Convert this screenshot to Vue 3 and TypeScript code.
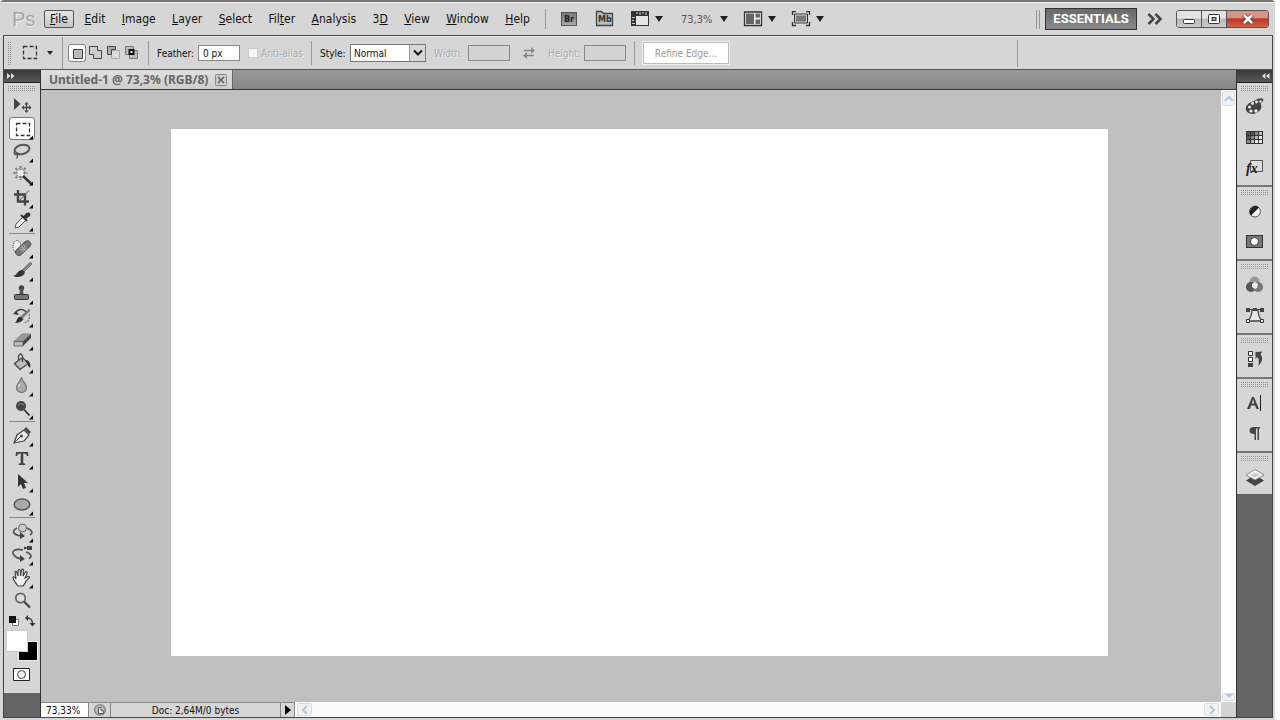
<script setup lang="ts">
import { ref } from 'vue'

interface Item { name: string; art: string; more?: boolean }
interface MenuEntry { pre: string; key: string; post: string }

const menus: MenuEntry[] = [
  { pre: '', key: 'F', post: 'ile' },
  { pre: '', key: 'E', post: 'dit' },
  { pre: '', key: 'I', post: 'mage' },
  { pre: '', key: 'L', post: 'ayer' },
  { pre: '', key: 'S', post: 'elect' },
  { pre: 'Fil', key: 't', post: 'er' },
  { pre: '', key: 'A', post: 'nalysis' },
  { pre: '3', key: 'D', post: '' },
  { pre: '', key: 'V', post: 'iew' },
  { pre: '', key: 'W', post: 'indow' },
  { pre: '', key: 'H', post: 'elp' },
]

const toolGroups: Item[][] = [
  [
    { name: 'Move', art: '<path d="M5 4v12l6.500-6z" fill="#444"/><path d="M17.500 9v9M13 13.500h9" stroke="#444" stroke-width="1.300"/><path d="M17.500 8l2.200 2.500h-4.400zM17.500 19l2.200-2.500h-4.400zM12.500 13.500l2.500-2.200v4.400zM22.500 13.500L20 11.300v4.400z" fill="#444"/>' },
    { name: 'Marquee', more: true, art: '<rect x="7.500" y="6.500" width="13" height="12" fill="none" stroke="#333" stroke-width="1.300" stroke-dasharray="4 2"/>' },
    { name: 'Lasso', more: true, art: '<ellipse cx="13" cy="9.500" rx="7.500" ry="4.500" transform="rotate(-12 13 9.500)" fill="none" stroke="#555" stroke-width="2"/><path d="M6.500 12c-2 0-1.500 3 .5 2.500s1-2.500-.5-2.500M7 14c2 1 2 3 .5 4.500" fill="none" stroke="#555" stroke-width="1.300"/>' },
    { name: 'Magic wand', more: true, art: '<circle cx="11.500" cy="10" r="4.500" fill="#eee" stroke="#999"/><path d="M11.500 3v4M11.500 13v4M4.500 10h4M14.500 10h4M6.500 5l2.500 2.500M16.500 5L14 7.500M6.500 15L9 12.500" stroke="#777" stroke-width="2" stroke-dasharray="2 1"/><path d="M14 13l8 7.500" stroke="#333" stroke-width="2.400"/>' },
    { name: 'Crop', more: true, art: '<path d="M9 4v11.500h11M5 8.500h11v11" fill="none" stroke="#444" stroke-width="2.400"/><path d="M9.500 15.500L20 4.500" stroke="#555"/>' },
    { name: 'Eyedropper', more: true, art: '<path d="M6 19l1-4 7-7 3 3-7 7z" fill="#f4f4f4" stroke="#555"/><path d="M12 6l6 6M14 9l4.500-4.500" stroke="#333" stroke-width="2"/><path d="M15 8l3-4q2-1 3 0t0 3l-4 3z" fill="#333"/>' },
  ],
  [
    { name: 'Healing brush', more: true, art: '<ellipse cx="8" cy="10.500" rx="4" ry="6" fill="#eee" stroke="#333" stroke-dasharray="1 1"/><g transform="rotate(-43 14 12)"><rect x="5" y="9" width="18" height="6.500" rx="3" fill="#777" stroke="#555"/><rect x="11" y="9.500" width="6" height="5.500" fill="#aaa"/><path d="M12 11h1M15 11h1M12 13.500h1M15 13.500h1" stroke="#333"/></g>' },
    { name: 'Brush', more: true, art: '<path d="M13 11l8-7.500q2 0 1.500 2L15 13z" fill="#888" stroke="#555" stroke-width=".7"/><path d="M13.500 11l2.500 2.500q-2 4.500-8 4.500-3 0-3.500-1.500 3-.5 4-3 2-3 5-2.500z" fill="#333"/>' },
    { name: 'Clone stamp', more: true, art: '<circle cx="12.500" cy="6" r="2.700" fill="#444"/><path d="M11 7h3l.5 6h-4z" fill="#555"/><rect x="5.500" y="12.500" width="14" height="5" rx="1" fill="#777" stroke="#333"/>' },
    { name: 'History brush', more: true, art: '<path d="M6.500 8c2-4 7-5 11-1" fill="none" stroke="#444" stroke-width="1.500"/><path d="M4 9l6 1-3-4z" fill="#333"/><path d="M20 9q2 7-5 9" fill="none" stroke="#777" stroke-width="1.300" stroke-dasharray="2 1"/><path d="M12 11l8-7 1.500 1.500L14 13z" fill="#777"/><path d="M12 11.500l2.500 2.500q-2 4-9 4 2-1 2.500-3.500 1-3 4-3z" fill="#333"/>' },
    { name: 'Eraser', more: true, art: '<path d="M5 13.500L13 6h9l-8 7.500z" fill="#999" stroke="#777" stroke-width=".8"/><path d="M5 13.500h9V18H5z" fill="#bbb" stroke="#555" stroke-width=".8"/><path d="M14 13.500L22 6v4l-8 8z" fill="#444"/>' },
    { name: 'Paint bucket', more: true, art: '<path d="M5.500 12.500l8-6 6 6-8.500 6z" fill="#bbb" stroke="#444" stroke-width="1.300"/><path d="M9.500 9V5q2-4 4 0v6" fill="none" stroke="#444" stroke-width="1.300"/><path d="M16 9q5-1 5.500 6.500-.5 2-2 0L18 12z" fill="#333"/>' },
    { name: 'Blur', more: true, art: '<path d="M12.500 3.500c1 4 5 6 5 10a5 5 0 0 1-10 0c0-4 4-6 5-10z" fill="#aaa" stroke="#777" stroke-width="1.200"/><path d="M9.500 13q0-2 2-3.500" stroke="#eee" fill="none"/>' },
    { name: 'Dodge', more: true, art: '<circle cx="12" cy="9" r="5" fill="#444"/><path d="M9 8q3-3 6 0" stroke="#888" fill="none"/><path d="M15 12.500l5.500 6" stroke="#333" stroke-width="1.800"/>' },
  ],
  [
    { name: 'Pen', more: true, art: '<path d="M5 19L8 11l7-5 5 5-5 6z" fill="#eee" stroke="#444" stroke-width="1.200"/><path d="M15 5l2-2 5 5-2 2z" fill="#444"/><path d="M5 19l7-7" stroke="#444"/><circle cx="12.500" cy="12" r="1.500" fill="#444"/>' },
    { name: 'Type', more: true, art: '<path d="M7 5h12l.5 4H18q-.5-2.500-3-2.500h-.7V16l2 .7V18H9.700v-1.300l2-.7V6.500H11Q8.500 6.500 8 9H6.500z" fill="#444"/>' },
    { name: 'Path selection', more: true, art: '<path d="M9 4v13l3-3 2 5 3-1.200-2-4.800h4z" fill="#333"/>' },
    { name: 'Ellipse', more: true, art: '<ellipse cx="13" cy="11.500" rx="7.800" ry="5.500" fill="#aaa" stroke="#555" stroke-width="1.500"/>' },
  ],
  [
    { name: '3D rotate', more: true, art: '<path d="M8 8c-8 4-1 8 7 8M18 8c7 3 5 6 3 7" fill="none" stroke="#555" stroke-width="1.700"/><path d="M11 12l5 4-5 3z" fill="#444"/><circle cx="13.500" cy="8" r="4" fill="#ccc" stroke="#666"/>' },
    { name: '3D orbit', more: true, art: '<path d="M14 7C7 5 2 8 4.500 11.500 6.500 14.500 10 16 14 16M17 9c6 2 6 5 3 6.500" fill="none" stroke="#555" stroke-width="1.700"/><path d="M11 12l5 4-5 3zM15 3.500l3 1V3h5v4h-5V5.500l-3 1z" fill="#444"/>' },
    { name: 'Hand', more: true, art: '<path d="M9 20q-4-5-5-8c0-2 2-1 3 1L6 6c1-1.500 2 0 3 4V5c0-2 2-2 2.500 0v5l1-6c1-1.500 2.500-.5 2 1l-.5 5 2.500-4c1-1 2 0 1.500 1.500L16 12l3-1.500c2 0 2 1 .5 2L17 15q-1 3-3 5z" fill="#eee" stroke="#444" stroke-width="1.200"/>' },
    { name: 'Zoom', art: '<circle cx="11.500" cy="9" r="4.700" fill="#ddd" stroke="#666" stroke-width="1.700"/><path d="M15 12.500l6 6" stroke="#444" stroke-width="2.300"/>' },
  ],
]

const panelGroups: Item[][] = [
  [
    { name: 'Color', art: '<path d="M14 9c6-4 11-3 9 0-1 2-3 2-2 4 2 4-3 8-8 9-5 0-8-3-7-7 1-3 4-5 8-6z" fill="#444"/><g fill="#eee"><circle cx="9.500" cy="15" r="1.500"/><circle cx="12.500" cy="11.500" r="1.400"/><circle cx="16.500" cy="10" r="1.400"/><circle cx="20.500" cy="9.500" r="1.200"/><circle cx="11" cy="19" r="1.600"/><circle cx="16" cy="19" r="1.700"/></g>' },
    { name: 'Swatches', art: '<path d="M6 9h17v13H6z" fill="#333"/><path d="M7 10h3v3H7zM11 10h3v3h-3zM7 14h3v3H7z" fill="#555"/><path d="M15 10h3v3h-3zM11 14h3v3h-3zM7 18h3v3H7z" fill="#888"/><path d="M19 10h3v3h-3zM15 14h3v3h-3zM11 18h3v3h-3z" fill="#bbb"/><path d="M19 14h3v3h-3zM15 18h3v3h-3zM19 18h3v3h-3z" fill="#eee"/>' },
    { name: 'Styles', art: '<path d="M10.500 8.500h12v11h-12z" fill="#ddd" stroke="#555"/><text x="6" y="21" font-family="Liberation Serif, serif" font-size="14" font-style="italic" font-weight="700" fill="#222">fx</text>' },
  ],
  [
    { name: 'Adjustments', art: '<circle cx="15" cy="15.500" r="5.500" fill="#f4f4f4" stroke="#555"/><path d="M19 11.500a5.700 5.700 0 0 0-8 8z" fill="#222"/>' },
    { name: 'Masks', art: '<rect x="6.500" y="9.500" width="16" height="12" fill="#777" stroke="#333"/><circle cx="14.500" cy="15.500" r="4" fill="#fff" stroke="#333"/>' },
  ],
  [
    { name: 'Channels', art: '<circle cx="14.500" cy="11.500" r="5" fill="#999"/><circle cx="11" cy="17" r="5" fill="#555"/><circle cx="18" cy="17" r="5" fill="#777"/><path d="M12 14l3-2 3 2-1 4-2 1-3-2z" fill="#eee"/>' },
    { name: 'Paths', art: '<path d="M8 21q4-5 4-11h6q0 6 4 11z" fill="#e8e8e8" stroke="#444" stroke-width="1.300"/><path d="M7 9.500h16" stroke="#444"/><path d="M6 8h4v4H6zM13 8h4v3h-4zM20 8h4v4h-4z" fill="#444"/><path d="M6.500 19.500h3v3h-3zM20.500 19.500h3v3h-3z" fill="#fff" stroke="#333"/>' },
  ],
  [
    { name: 'History', art: '<path d="M8.500 7.500h4v4h-4zM8.500 13.500h4v4h-4z" fill="#fff" stroke="#333"/><path d="M8 19h5v4H8z" fill="#444"/><path d="M15.500 8l7-.5-2 2.500q4 5-2 12 1-6-1-9l-2 2z" fill="#444"/>' },
  ],
  [
    { name: 'Character', art: '<path d="M7 21l5-12h2l5 12h-2.500L15 17.500h-4L10 21zM11.800 15.500h2.600L13 11.500z" fill="#444"/><path d="M20.500 7v16" stroke="#222"/>' },
    { name: 'Paragraph', art: '<path d="M14 9h6v1.500h-1V22h-1.500V10.500H16V22h-1.500v-6q-5 0-5-3.500T14 9z" fill="#444"/>' },
  ],
  [
    { name: 'Layers', art: '<path d="M6 18.500l9-5.500 9 5.500-9 5.500z" fill="#444"/><path d="M6 13l9-5.500 9 5.500-9 5z" fill="#f4f4f4" stroke="#777" stroke-width=".8"/><path d="M10 13l5-2.500 5 2.500-5 2.500z" fill="#ccc"/>' },
  ],
]

const modes: Item[] = [
  { name: 'New selection', art: '<path d="M5.500 5.500h9v9h-9z" fill="#bbb" stroke="#444"/>' },
  { name: 'Add to selection', art: '<path d="M3.500 2.500h8v4h4v8h-8v-4h-4z" fill="#ccc" stroke="#444"/>' },
  { name: 'Subtract from selection', art: '<path d="M7.500 6.500h8v8h-8z" fill="#ddd" stroke="#aaa"/><path d="M3.500 10.500v-8h8v3h-4v5z" fill="#aaa" stroke="#444"/>' },
  { name: 'Intersect with selection', art: '<path d="M3.500 2.500h8v8h-8zM7.500 6.500h8v8h-8z" fill="#bbb" stroke="#777"/><path d="M7.500 6h4v4h-4z" fill="#ddd" stroke="#111" stroke-width="2"/>' },
]

const activeTool = ref('Marquee')
const feather = ref('0 px')
const antiAlias = ref(false)
const style = ref('Normal')
const zoomLevel = ref('73,33%')
</script>

<template>
  <div class="window">
    <header class="menubar">
      <span class="logo">Ps</span>
      <nav class="menus">
        <button v-for="(m, i) in menus" :key="i" class="menu" :class="{ open: i === 0 }">{{ m.pre }}<u>{{ m.key }}</u>{{ m.post }}</button>
      </nav>
      <div class="launch">
        <button class="plain br" aria-label="Bridge">Br</button>
        <button class="plain mb" aria-label="Mini Bridge">
          <svg width="20" height="18" viewBox="0 0 20 18"><path d="M1.500 15.500V1.500h5l2 2h9v12z" fill="#bbb" stroke="#444" stroke-width="1.300" /></svg>
          <span>Mb</span>
        </button>
        <button class="plain drop" aria-label="View extras">
          <svg width="20" height="16" viewBox="0 0 20 16"><path d="M1 0h18v15H1z" fill="#333" /><path d="M6 5h12v9H6z" fill="#e6e6e6" /><path d="M7 1v2M10 1v3M13 1v2M16 1v3M2 6.500h3M2 9.500h2M2 12.500h3" stroke="#ccc" /></svg>
          <i class="caret"></i>
        </button>
        <button class="plain drop zoomdrop">73,3%<i class="caret"></i></button>
        <button class="plain drop" aria-label="Arrange documents">
          <svg width="20" height="16" viewBox="0 0 20 16"><path d="M1.500 1h17v13.500h-17z" fill="#eee" stroke="#333" stroke-width="1.300" /><path d="M3 2.500h8V13H3zM12.500 2.500H17v4h-4.500zM12.500 8.500H17V13h-4.500z" fill="#666" /></svg>
          <i class="caret"></i>
        </button>
        <button class="plain drop" aria-label="Screen mode">
          <svg width="20" height="16" viewBox="0 0 20 16"><path d="M1.500 4V.5H5M15 .5h3.500V4M1.500 11v3.500H5M15 14.500h3.500V11" fill="none" stroke="#333" stroke-width="1.300" /><path d="M3.500 3h13v9h-13z" fill="#777" stroke="#333" /><path d="M4.500 4h11v7h-11z" fill="none" stroke="#ccc" /></svg>
          <i class="caret"></i>
        </button>
      </div>
      <div class="right">
        <i class="bars"></i>
        <button class="workspace">ESSENTIALS</button>
        <button class="plain chev" aria-label="More workspaces">
          <svg width="16" height="14" viewBox="0 0 16 14"><path d="M1.500 2l5 5-5 5M8.500 2l5 5-5 5" fill="none" stroke="#444" stroke-width="2.500" /></svg>
        </button>
        <div class="controls">
          <button aria-label="Minimize"><svg width="14" height="14" viewBox="0 0 14 14"><rect x="1.500" y="7.500" width="11" height="4" rx="1" fill="#fff" stroke="#333" /></svg></button>
          <button aria-label="Restore"><svg width="14" height="14" viewBox="0 0 14 14"><rect x="1.500" y="2.500" width="11" height="9" rx="1" fill="#fff" stroke="#333" /><rect x="5" y="5.500" width="4" height="3" fill="#aaa" stroke="#333" /></svg></button>
          <button class="close" aria-label="Close"><svg width="14" height="14" viewBox="0 0 14 14"><path d="M3 3l8 8M11 3l-8 8" stroke="#533" stroke-width="4.500" /><path d="M3 3l8 8M11 3l-8 8" stroke="#fff" stroke-width="2.600" /></svg></button>
        </div>
      </div>
    </header>

    <div class="frame">
      <div class="options">
        <i class="grip vertical"></i>
        <button class="plain preset" aria-label="Tool preset">
          <svg width="16" height="16" viewBox="0 0 16 16"><rect x="1.500" y="1.500" width="13" height="12" fill="none" stroke="#333" stroke-width="1.300" stroke-dasharray="4 2" /></svg>
          <i class="caret small"></i>
        </button>
        <i class="rule tall"></i>
        <div class="modes">
          <button v-for="(m, i) in modes" :key="m.name" class="mode" :class="{ on: i === 0 }" :aria-label="m.name">
            <svg width="18" height="18" viewBox="0 0 18 18" v-html="m.art"></svg>
          </button>
        </div>
        <i class="rule"></i>
        <label class="feather" for="feather">Feather:</label>
        <input id="feather" v-model="feather" class="box" type="text">
        <input id="anti" v-model="antiAlias" class="tick" type="checkbox" disabled>
        <label class="anti dim" for="anti">Anti-alias</label>
        <i class="rule"></i>
        <label class="stylelabel" for="style">Style:</label>
        <div class="select">
          <select id="style" v-model="style"><option>Normal</option><option>Fixed Ratio</option><option>Fixed Size</option></select>
          <span class="knob"><svg width="10" height="8" viewBox="0 0 10 8"><path d="M1 1.500l4 4 4-4" fill="none" stroke="#222" stroke-width="2.200" /></svg></span>
        </div>
        <label class="width dim" for="width">Width:</label>
        <input id="width" class="box off" type="text" disabled>
        <button class="plain swap" aria-label="Swap width and height" disabled>
          <svg width="12" height="12" viewBox="0 0 12 12"><path d="M1 3.500h9M2 8.500h9" stroke="#888" stroke-width="1.300" /><path d="M8 0l4 3.500L8 7zM4 5L0 8.500 4 12z" fill="#888" /></svg>
        </button>
        <label class="height dim" for="height">Height:</label>
        <input id="height" class="box off" type="text" disabled>
        <i class="rule"></i>
        <button class="refine" disabled>Refine Edge...</button>
        <i class="rule end"></i>
      </div>

      <div class="workarea">
        <aside class="toolbar">
          <button class="collapse" aria-label="Collapse toolbar"><svg width="8" height="6" viewBox="0 0 8 6"><path d="M0 0l3.500 3L0 6zM4 0l3.500 3L4 6z" fill="#ddd" /></svg></button>
          <div class="tools">
            <i class="grip"></i>
            <div v-for="(group, g) in toolGroups" :key="g" class="toolgroup">
              <button v-for="t in group" :key="t.name" class="tool" :class="{ on: t.name === activeTool }" :aria-label="t.name" @click="activeTool = t.name">
                <svg width="26" height="23" viewBox="0 0 26 23"><g v-html="t.art"></g><path v-if="t.more" d="M24 18.500v4h-4z" fill="#000" /></svg>
              </button>
            </div>
            <div class="minis">
              <button class="plain" aria-label="Default colors"><svg width="12" height="12" viewBox="0 0 12 12"><path d="M4.500 4.500h6v6h-6z" fill="#fff" stroke="#777" /><path d="M1 1h7v7H1z" fill="#111" /></svg></button>
              <button class="plain" aria-label="Switch colors"><svg width="12" height="12" viewBox="0 0 12 12"><path d="M3 3q5 0 5.500 5" fill="none" stroke="#444" stroke-width="1.500" /><path d="M1 3l3-3v6zM5.500 8h6l-3 3.500z" fill="#333" /></svg></button>
            </div>
            <div class="swatches">
              <button class="swatch back" aria-label="Background color"></button>
              <button class="swatch fore" aria-label="Foreground color"></button>
            </div>
            <button class="plain mask" aria-label="Quick mask"><svg width="18" height="14" viewBox="0 0 18 14"><path d="M.5.5h16v12H.500z" fill="#fff" stroke="#222" /><circle cx="8.500" cy="6.500" r="4" fill="#eee" stroke="#444" /></svg></button>
          </div>
        </aside>

        <main class="document">
          <div class="tabs">
            <div class="tab">
              <span>Untitled-1 @ 73,3% (RGB/8)</span>
              <button aria-label="Close document"><svg width="12" height="12" viewBox="0 0 12 12"><rect x=".5" y=".5" width="11" height="11" rx="1" fill="#ccc" stroke="#888" /><path d="M3 3l6 6M9 3L3 9" stroke="#555" stroke-width="1.300" /></svg></button>
            </div>
          </div>
          <div class="viewport">
            <div class="stage"><div class="paper"></div></div>
            <div class="vscroll">
              <button class="arrow" aria-label="Scroll up"><svg width="10" height="8" viewBox="0 0 10 8"><path d="M1 6l4-4 4 4" fill="none" stroke="#b4c6d8" stroke-width="2" /></svg></button>
              <button class="arrow cut" aria-label="Scroll down"><svg width="8" height="4" viewBox="0 0 8 4"><path d="M0 0h8L4 4z" fill="#b4c6d8" /></svg></button>
            </div>
          </div>
          <footer class="status">
            <input v-model="zoomLevel" class="zoomfield" type="text" aria-label="Zoom level">
            <button class="cell clock" aria-label="Version cue"><svg width="14" height="14" viewBox="0 0 14 14"><circle cx="7" cy="7" r="5.300" fill="#bbb" stroke="#888" stroke-width="1.500" /><path d="M5.500 4.500v6h5V8L8 7.500V4.500z" fill="#eee" stroke="#555" /></svg></button>
            <span class="cell doc">Doc: 2,64M/0 bytes</span>
            <button class="cell play" aria-label="Status options"><svg width="6" height="10" viewBox="0 0 6 10"><path d="M0 0l6 5-6 5z" fill="#000" /></svg></button>
            <div class="hscroll">
              <button class="arrow" aria-label="Scroll left"><svg width="8" height="10" viewBox="0 0 8 10"><path d="M6 1L2 5l4 4" fill="none" stroke="#b4c6d8" stroke-width="2" /></svg></button>
              <button class="arrow" aria-label="Scroll right"><svg width="8" height="10" viewBox="0 0 8 10"><path d="M2 1l4 4-4 4" fill="none" stroke="#b4c6d8" stroke-width="2" /></svg></button>
            </div>
            <i class="corner"></i>
          </footer>
        </main>

        <aside class="dock">
          <button class="collapse" aria-label="Expand panels"><svg width="8" height="6" viewBox="0 0 8 6"><path d="M3.500 0L0 3l3.500 3zM7.500 0L4 3l3.500 3z" fill="#ddd" /></svg></button>
          <div v-for="(group, g) in panelGroups" :key="g" class="panelgroup">
            <i class="grip"></i>
            <button v-for="p in group" :key="p.name" class="plain panel" :aria-label="p.name">
              <svg width="30" height="30" viewBox="0 0 30 30" v-html="p.art"></svg>
            </button>
          </div>
        </aside>
      </div>
    </div>
  </div>
</template>

<style>
body { background: #fff; }
</style>

<style scoped>
.window, .window * { box-sizing: border-box; }
.window {
  display: flex;
  flex-direction: column;
  height: 100vh;
  margin-right: 5px;
  padding-bottom: 2px;
  background: #d6d6d6;
  border-top: 2px solid #777;
  border-radius: 4px 4px 0 0;
  font-family: "DejaVu Sans Condensed", "DejaVu Sans", "Liberation Sans", sans-serif;
  font-size: 10px;
  color: #111;
}
button, input, select { font: inherit; color: inherit; margin: 0; padding: 0; }
svg { display: block; }
.plain { border: 0; background: none; display: flex; align-items: center; justify-content: center; }

.menubar { flex: none; display: flex; align-items: center; height: 33px; border-top: 1px solid #eee; }
.logo { width: 32px; margin-left: 12px; font: 20px/28px "Liberation Sans", sans-serif; color: #a4a4a4; text-shadow: 1px 1px 0 #eee; }
.menus { display: flex; justify-content: space-between; width: 492px; margin-right: 9px; }
.menu { height: 18px; padding: 0 5px; border: 1px solid transparent; border-radius: 2px; background: none; font-size: 12px; line-height: 16px; white-space: nowrap; }
.menu.open { border-color: #555; background: linear-gradient(#e6e6e6, #c4c4c4); }
.launch { display: flex; align-items: center; flex: 1; height: 20px; padding-left: 15px; border-left: 1px solid #999; }
.br { width: 16px; height: 14px; border: 1px solid #555; background: linear-gradient(#777, #aaa); font-size: 9px; font-weight: 700; color: #222; }
.mb { position: relative; width: 20px; margin-left: 18px; }
.mb span { position: absolute; inset: 4px 0 0; font-size: 9px; line-height: 11px; font-weight: 700; color: #333; }
.drop { gap: 5px; margin-left: 15px; height: 16px; }
.zoomdrop { margin-left: 18px; gap: 8px; font-size: 11px; color: #555; }
.caret { width: 0; height: 0; border: 4px solid transparent; border-top: 6px solid #222; border-bottom: 0; }
.caret.small { border-width: 4px 3px 0; }
.right { display: flex; align-items: center; margin-right: 6px; }
.bars { width: 4px; height: 19px; margin-right: 5px; border: solid #999; border-width: 0 1px; }
.workspace { width: 92px; height: 22px; border: 1px solid #333; background: linear-gradient(#696969, #888); color: #fff; font: 700 13px/20px Roboto, "Liberation Sans", sans-serif; }
.chev { margin: 0 13px 0 10px; }
.controls { display: flex; width: 93px; height: 18px; border: 1px solid #555; border-radius: 3px; overflow: hidden; }
.controls button { display: flex; align-items: center; justify-content: center; width: 25px; border: 0; border-right: 1px solid #555; background: linear-gradient(#e4e4e4 45%, #b8b8b8 50%, #ccc); }
.controls .close { flex: 1; border-right: 0; background: linear-gradient(#dc9386 0 40%, #b83823 50%, #d0604b); }

.frame { flex: 1; min-height: 0; display: flex; flex-direction: column; margin: 0 2px 0 3px; border: 1px solid #444; }
.options { flex: none; display: flex; align-items: center; height: 34px; padding-left: 4px; border-top: 1px solid #eee; border-bottom: 1px solid #555; }
.options label { flex: none; }
.options .dim { color: #aaa; text-shadow: 1px 1px 0 #eee; }
.grip {
  display: block;
  width: 28px;
  height: 5px;
  background:
    linear-gradient(transparent 1px, #d6d6d6 1px) 0 0 / 2px 2px,
    linear-gradient(90deg, #909090 1px, #d6d6d6 1px) 0 0 / 2px 2px;
}
.grip.vertical { width: 4px; height: 23px; }
.preset { width: 50px; gap: 9px; padding-left: 10px; justify-content: flex-start; }
.rule { flex: none; width: 1px; height: 24px; background: #999; }
.rule.tall { height: 32px; }
.modes { display: flex; width: 85px; padding-left: 5px; }
.mode { width: 18px; height: 18px; border: 0; background: none; border-radius: 3px; }
.mode.on { background: #fff; box-shadow: inset 0 0 0 1px #888; }
.feather { width: 41px; margin-left: 8px; }
.box { width: 42px; height: 16px; border: 1px solid #888; background: #fff; padding-left: 4px; border-radius: 0; }
.box.off { background: #d4d4d4; }
.tick { appearance: none; width: 10px; height: 10px; margin-left: 8px; background: #f6f6f6; border: 1px solid #ccc; }
.anti { width: 50px; margin-left: 3px; }
.stylelabel { width: 30px; margin-left: 8px; }
.select { position: relative; width: 76px; height: 18px; margin-right: 8px; }
.select select { appearance: none; width: 76px; height: 18px; padding-left: 3px; border: 1px solid #777; border-radius: 0; background: #fff; }
.knob { position: absolute; top: 1px; right: 1px; width: 16px; height: 16px; display: flex; align-items: center; justify-content: center; border-left: 1px solid #999; background: #d8d8d8; pointer-events: none; }
.width { width: 34px; }
.swap { width: 38px; }
.height { width: 36px; }
.box + .rule { margin-left: 8px; }
.refine { width: 86px; height: 22px; margin-left: 8px; border: 1px solid #bbb; box-shadow: 0 0 0 1px #eee; background: #fff; color: #999; }
.rule.end { height: 27px; margin: 0 254px 0 auto; }

.workarea { flex: 1; min-height: 0; display: flex; }
.toolbar, .dock { flex: none; display: flex; flex-direction: column; width: 37px; background: #646464; }
.toolbar { border-right: 1px solid #333; }
.dock { width: 36px; border-left: 1px solid #333; }
.collapse { flex: none; display: flex; align-items: center; height: 13px; padding-left: 3px; border: 0; border-bottom: 1px solid #222; background: linear-gradient(#383838, #585858); }
.dock .collapse { justify-content: flex-end; padding: 0 2px 0 0; }
.tools { display: flex; flex-direction: column; align-items: center; height: 610px; padding-top: 3px; background: #d6d6d6; }
.tools .grip { margin-bottom: 3px; }
.toolgroup + .toolgroup { margin-top: 1px; padding-top: 2px; border-top: 1px solid #888; }
.tool { display: block; width: 26px; height: 23px; border: 0; background: none; border-radius: 3px; }
.tool.on { background: #fff; box-shadow: inset 0 0 0 1px #777; }
.minis { display: flex; justify-content: space-between; width: 28px; margin-top: 3px; }
.swatches { position: relative; width: 32px; height: 31px; margin-top: 3px; }
.swatch { position: absolute; border: 1px solid #ccc; }
.fore { left: 0; top: 0; width: 22px; height: 22px; background: #fff; }
.back { right: 0; bottom: 0; width: 20px; height: 20px; background: #000; border-color: #eee; }
.mask { margin-top: 7px; }

.document { flex: 1; min-width: 0; display: flex; flex-direction: column; }
.tabs { flex: none; display: flex; height: 20px; background: linear-gradient(#999, #868686); border-bottom: 1px solid #333; }
.tab { display: flex; align-items: center; justify-content: space-between; width: 192px; padding: 0 5px 0 8px; background: linear-gradient(#e0e0e0, #cecece); border-right: 1px solid #666; font: 700 12px/18px "Noto Sans", sans-serif; color: #666; white-space: nowrap; }
.tab button { border: 0; background: none; }
.viewport { flex: 1; min-height: 0; display: flex; }
.stage { flex: 1; display: flex; padding: 39px 113px 46px 130px; background: #c0c0c0; }
.paper { flex: 1; background: #fff; }
.vscroll { width: 15px; display: flex; flex-direction: column; justify-content: space-between; padding: 1px; background: #fcfcfc; }
.arrow { display: flex; align-items: center; justify-content: center; width: 13px; height: 15px; border: 1px solid #ddd; border-radius: 2px; background: #f0f2f4; }
.arrow.cut { height: 8px; align-items: flex-start; }
.status { flex: none; display: flex; height: 15px; }
.zoomfield { width: 48px; padding-left: 5px; border: 0; border-top: 1px solid #888; border-right: 1px solid #888; background: #fff; border-radius: 0; }
.cell { display: flex; align-items: center; justify-content: center; border: solid #888; border-width: 1px 1px 0 0; background: #d6d6d6; white-space: nowrap; }
.clock { width: 22px; }
.doc { width: 170px; }
.play { width: 14px; }
.hscroll { flex: 1; display: flex; justify-content: space-between; padding: 1px 2px; background: #fafafa; }
.hscroll .arrow { width: 15px; height: 13px; }
.corner { width: 15px; background: #d4d4d4; }

.panelgroup { display: flex; flex-direction: column; align-items: center; padding: 3px 0; background: #d6d6d6; border-bottom: 2px solid #777; }
.panelgroup:last-child { border-bottom: 0; padding-bottom: 2px; }
.panelgroup .grip { margin-bottom: 1px; }
.panel { width: 35px; height: 30px; }
</style>
